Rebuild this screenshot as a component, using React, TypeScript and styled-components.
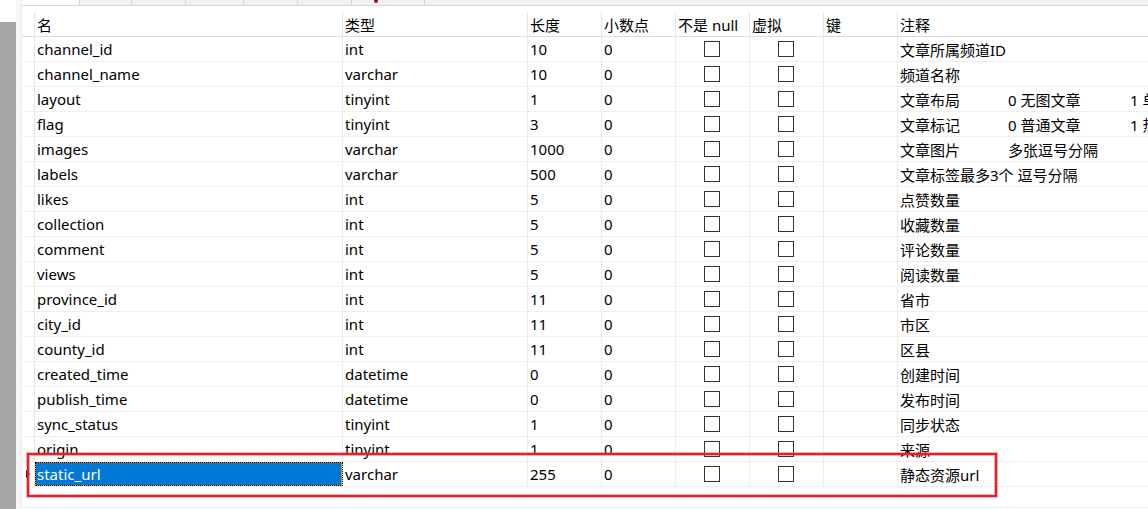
import { createGlobalStyle, styled } from "styled-components";

interface IField {
  name: string;
  type: string;
  length: string;
  comment: string[];
}

const fields: IField[] = [
  { name: "channel_id", type: "int", length: "10", comment: ["文章所属频道ID"] },
  { name: "channel_name", type: "varchar", length: "10", comment: ["频道名称"] },
  { name: "layout", type: "tinyint", length: "1", comment: ["文章布局", "0 无图文章", "1 单图文章"] },
  { name: "flag", type: "tinyint", length: "3", comment: ["文章标记", "0 普通文章", "1 热门文章"] },
  { name: "images", type: "varchar", length: "1000", comment: ["文章图片", "多张逗号分隔"] },
  { name: "labels", type: "varchar", length: "500", comment: ["文章标签最多3个 逗号分隔"] },
  { name: "likes", type: "int", length: "5", comment: ["点赞数量"] },
  { name: "collection", type: "int", length: "5", comment: ["收藏数量"] },
  { name: "comment", type: "int", length: "5", comment: ["评论数量"] },
  { name: "views", type: "int", length: "5", comment: ["阅读数量"] },
  { name: "province_id", type: "int", length: "11", comment: ["省市"] },
  { name: "city_id", type: "int", length: "11", comment: ["市区"] },
  { name: "county_id", type: "int", length: "11", comment: ["区县"] },
  { name: "created_time", type: "datetime", length: "0", comment: ["创建时间"] },
  { name: "publish_time", type: "datetime", length: "0", comment: ["发布时间"] },
  { name: "sync_status", type: "tinyint", length: "1", comment: ["同步状态"] },
  { name: "origin", type: "tinyint", length: "1", comment: ["来源"] },
  { name: "static_url", type: "varchar", length: "255", comment: ["静态资源url"] },
];

const tabStops = [78, 130, 184, 242, 296, 350, 423];

const App = () => {
  const current = fields.length - 1;
  return (
    <Page>
      <GlobalStyle />
      <Gutter>
        <GutterTop />
        <GutterBar />
      </Gutter>
      <Gap />
      <Main>
        <TabBar>
          {tabStops.map((x) => (
            <TabStop key={x} style={{ left: x - 21 }} />
          ))}
          <TabMark />
        </TabBar>
        <Spacer />
        <Header>
          <HeadCell />
          <HeadCell>名</HeadCell>
          <HeadCell>类型</HeadCell>
          <HeadCell>长度</HeadCell>
          <HeadCell>小数点</HeadCell>
          <HeadCell>不是 null</HeadCell>
          <HeadCell>虚拟</HeadCell>
          <HeadCell>键</HeadCell>
          <HeadCell $last>注释</HeadCell>
        </Header>
        {fields.map((f, i) => (
          <Row key={f.name}>
            <Marker>{i === current && <Arrow />}</Marker>
            <Cell $selected={i === current}>{f.name}</Cell>
            <Cell>{f.type}</Cell>
            <Cell>{f.length}</Cell>
            <Cell>0</Cell>
            <Cell $center>
              <Check />
            </Cell>
            <Cell $center>
              <Check />
            </Cell>
            <Cell />
            <Cell $last>
              {f.comment.map((c, j) => (
                <Segment key={j} $w={j === 0 ? 108 : j === 1 ? 122 : 0}>
                  {c}
                </Segment>
              ))}
            </Cell>
          </Row>
        ))}
        <Filler />
      </Main>
      <Annotation />
    </Page>
  );
};

export default App;

const GlobalStyle = createGlobalStyle`
  body {
    margin: 0;
    background: #ffffff;
    overflow: hidden;
    font-family: "Noto Sans", "Noto Sans CJK SC", sans-serif;
  }
`;

const Page = styled.div`
  position: relative;
  display: flex;
  width: 1148px;
  height: 509px;
  overflow: hidden;
  background: #ffffff;
  color: #000000;
  font-size: 15px;
`;

const Gutter = styled.div`
  width: 16px;
  display: flex;
  flex-direction: column;
`;

const GutterTop = styled.div`
  height: 22px;
  background: #ffffff;
`;

const GutterBar = styled.div`
  flex: 1;
  background: #a5a5a5;
`;

const Gap = styled.div`
  width: 5px;
  background: #f7f7f7;
`;

const Main = styled.div`
  flex: 1;
  display: flex;
  flex-direction: column;
  border-left: 1px solid #ececec;
  min-width: 0;
`;

const TabBar = styled.div`
  position: relative;
  height: 6px;
  box-sizing: border-box;
  background: #f0f0f0;
  border-bottom: 1px solid #d9d9d9;
  box-shadow: inset 57px 0 0 #ffffff;
`;

const TabStop = styled.span`
  position: absolute;
  top: 0;
  width: 1px;
  height: 5px;
  background: #d6d6d6;
`;

const TabMark = styled.span`
  position: absolute;
  left: 352px;
  top: 0;
  width: 4px;
  height: 3px;
  background: #7a1f2a;
  border-radius: 0 0 2px 2px;
`;

const Spacer = styled.div`
  height: 6px;
`;

const columns = "13px 308px 185px 74px 74px 74px 74px 74px 1fr";

const Header = styled.div`
  display: grid;
  grid-template-columns: ${columns};
  height: 25px;
  box-sizing: border-box;
  border-bottom: 1px solid #dedede;
`;

const HeadCell = styled.div<{ $last?: boolean }>`
  display: flex;
  align-items: center;
  padding-left: 2px;
  box-sizing: border-box;
  border-right: ${(p) => (p.$last ? "none" : "1px solid #e6e6e6")};
  white-space: nowrap;
  overflow: hidden;
`;

const Row = styled.div`
  display: grid;
  grid-template-columns: ${columns};
  height: 25px;
  box-sizing: border-box;
  border-bottom: 1px solid #efefef;
`;

const Marker = styled.div`
  display: flex;
  align-items: center;
  padding-left: 4px;
  box-sizing: border-box;
  border-right: 1px solid #e6e6e6;
`;

const Arrow = styled.span`
  width: 0;
  height: 0;
  border-top: 4px solid transparent;
  border-bottom: 4px solid transparent;
  border-left: 4px solid #000000;
`;

const Cell = styled.div<{ $selected?: boolean; $center?: boolean; $last?: boolean }>`
  display: flex;
  align-items: center;
  justify-content: ${(p) => (p.$center ? "center" : "flex-start")};
  padding-left: ${(p) => (p.$center ? "0" : "2px")};
  box-sizing: border-box;
  border-right: ${(p) => (p.$last ? "none" : "1px solid #ececec")};
  white-space: nowrap;
  overflow: hidden;
  background: ${(p) => (p.$selected ? "#0078d7" : "transparent")};
  color: ${(p) => (p.$selected ? "#ffffff" : "#000000")};
  outline: ${(p) => (p.$selected ? "1px dotted #000000" : "none")};
  outline-offset: -1px;
  box-shadow: ${(p) => (p.$selected ? "inset 0 0 0 1px #e0922e" : "none")};
`;

const Check = styled.span`
  width: 16px;
  height: 16px;
  margin-left: -1px;
  box-sizing: border-box;
  border: 1px solid #333333;
  background: #ffffff;
`;

const Segment = styled.span<{ $w: number }>`
  flex: 0 0 ${(p) => (p.$w ? `${p.$w}px` : "auto")};
`;

const Filler = styled.div`
  height: 21px;
  box-sizing: border-box;
  border-bottom: 1px solid #ececec;
`;

const Annotation = styled.div`
  position: absolute;
  left: 27px;
  top: 453px;
  width: 970px;
  height: 44px;
  box-sizing: border-box;
  border: 2px solid #e81f2a;
  box-shadow: 0 0 0 1px rgba(232, 31, 42, 0.35),
    inset 0 0 0 1px rgba(232, 31, 42, 0.35);
  pointer-events: none;
`;
